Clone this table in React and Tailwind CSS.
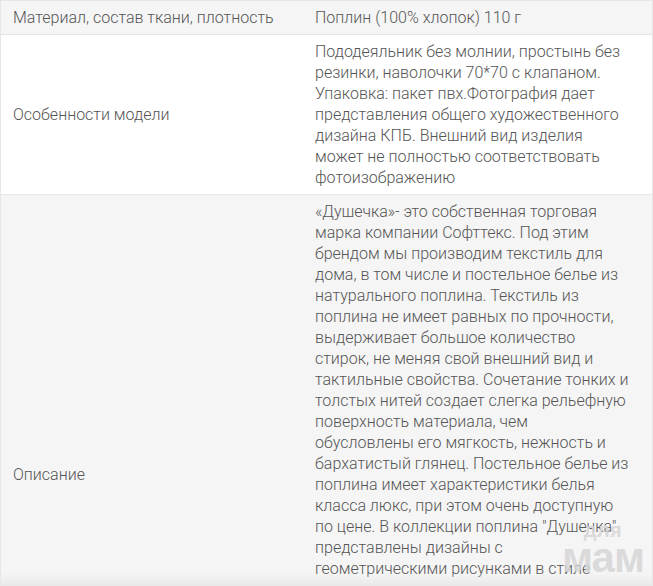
const rows = [
  {
    label: "Материал, состав ткани, плотность",
    bg: "bg-[#f5f5f5]",
    lines: ["Поплин (100% хлопок) 110 г"],
  },
  {
    label: "Особенности модели",
    bg: "bg-white",
    lines: [
      "Пододеяльник без молнии, простынь без",
      "резинки, наволочки 70*70 с клапаном.",
      "Упаковка: пакет пвх.Фотография дает",
      "представления общего художественного",
      "дизайна КПБ. Внешний вид изделия",
      "может не полностью соответствовать",
      "фотоизображению",
    ],
  },
  {
    label: "Описание",
    bg: "bg-[#f5f5f5]",
    lines: [
      "«Душечка»- это собственная торговая",
      "марка компании Софттекс. Под этим",
      "брендом мы производим текстиль для",
      "дома, в том числе и постельное белье из",
      "натурального поплина. Текстиль из",
      "поплина не имеет равных по прочности,",
      "выдерживает большое количество",
      "стирок, не меняя свой внешний вид и",
      "тактильные свойства. Сочетание тонких и",
      "толстых нитей создает слегка рельефную",
      "поверхность материала, чем",
      "обусловлены его мягкость, нежность и",
      "бархатистый глянец. Постельное белье из",
      "поплина имеет характеристики белья",
      "класса люкс, при этом очень доступную",
      "по цене. В коллекции поплина \"Душечка\"",
      "представлены дизайны с",
      "геометрическими рисунками в стиле",
      "минимализма, нежными цветочными",
      "узорами и яркими современными",
      "принтами. Каждый комплект упакован",
      "в удобный пакет и станет отличным",
      "подарком для родных и близких.",
      "Рекомендуется стирка при температуре",
      "не выше 40 градусов, без",
      "использования отбеливателей.",
    ],
  },
];

export default function App() {
  return (
    <div className="relative h-[586px] w-[653px] overflow-hidden bg-white font-['Roboto',sans-serif] text-[16px] font-light leading-[21px] text-[#555]">
      <div className="border-l border-r border-t border-[#e6e6e6]">
        {rows.map((row) => (
          <div key={row.label} className={`flex border-b border-[#e6e6e6] ${row.bg}`}>
            <div className="flex w-[302px] shrink-0 items-center px-3 py-[6px]">
              {row.label}
            </div>
            <div className="flex-1 px-3 py-[6px]">
              {row.lines.map((line, i) => (
                <div key={i} className="whitespace-nowrap">
                  {line}
                </div>
              ))}
            </div>
          </div>
        ))}
      </div>

      {/* watermark */}
      <div className="pointer-events-none absolute right-[12px] top-[520px] flex w-[76px] flex-col items-center font-['Liberation_Sans',sans-serif] font-bold leading-none text-[#d6d6d6]/85">
        <span className="text-[20px] tracking-wide">для</span>
        <span className="-mt-[3px] text-[42px] tracking-tight">мам</span>
      </div>
      <div className="pointer-events-none absolute bottom-0 left-0 h-[13px] w-full bg-gradient-to-b from-transparent to-[#e9e9e9]" />
    </div>
  );
}
